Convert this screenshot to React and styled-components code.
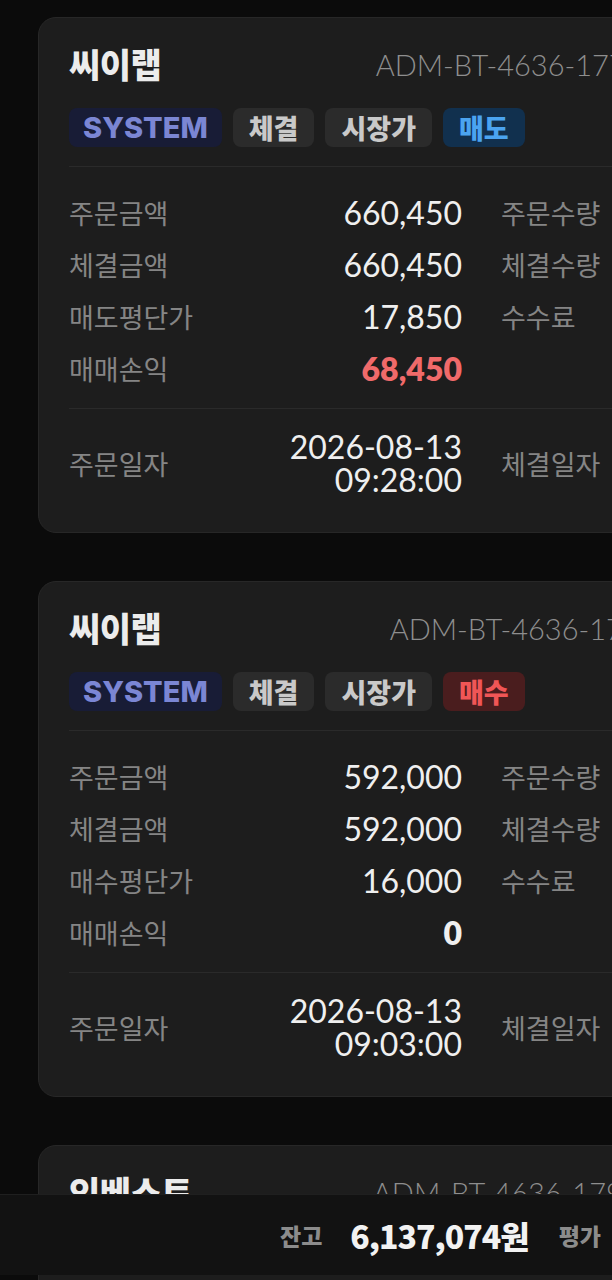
import React from "react";
import styled, { createGlobalStyle, css } from "styled-components";

const GlobalStyle = createGlobalStyle`
  html, body {
    margin: 0;
    padding: 0;
    background: #0b0b0b;
    overflow: hidden;
  }
  body {
    font-family: "Noto Sans CJK KR", "Noto Sans", sans-serif;
    -webkit-font-smoothing: antialiased;
  }
`;

const Page = styled.div`
  display: flex;
  flex-direction: column;
  gap: 48px;
  padding: 17px 0 0 38px;
  width: max-content;
`;

const Card = styled.section`
  box-sizing: border-box;
  width: 885px;
  background: #1d1d1d;
  border: 1px solid #272727;
  border-radius: 18px;
  padding: 26px 30px 36px 30px;
`;

const Header = styled.div`
  display: flex;
  align-items: center;
  justify-content: space-between;
  height: 40px;
`;

const Title = styled.h2`
  margin: 0;
  font-family: "Noto Sans CJK KR", sans-serif;
  font-size: 34px;
  font-weight: 900;
  line-height: 40px;
  color: #ececec;
  letter-spacing: -0.5px;
`;

const OrderId = styled.span`
  font-family: "Lato", "Noto Sans", sans-serif;
  font-size: 29px;
  font-weight: 300;
  color: #8e8e8e;
  white-space: nowrap;
`;

const Badges = styled.div`
  display: flex;
  gap: 11px;
  margin-top: 24px;
`;

const tones = {
  system: css`
    background: #181c36;
    color: #7b86d4;
  `,
  neutral: css`
    background: #2b2b2b;
    color: #c9c9c9;
  `,
  sell: css`
    background: #11304e;
    color: #4ba4f0;
  `,
  buy: css`
    background: #4a1d1e;
    color: #f05656;
  `,
};

const Badge = styled.span`
  display: inline-flex;
  align-items: center;
  height: 39px;
  padding: 0 ${(p) => (p.$latin ? 14 : 16)}px;
  border-radius: 8px;
  font-family: ${(p) =>
    p.$latin ? `"Inter", "Noto Sans", sans-serif` : `"Noto Sans CJK KR", sans-serif`};
  font-size: ${(p) => (p.$latin ? "29px" : "27px")};
  font-weight: 800;
  ${(p) => tones[p.$tone]}
`;

const Divider = styled.div`
  height: 1px;
  background: #2a2a2a;
  margin-top: ${(p) => p.$gap}px;
`;

const Grid = styled.div`
  display: grid;
  grid-template-columns: 393px 393px;
  column-gap: 39px;
  grid-auto-rows: ${(p) => p.$row || "52px"};
  margin-top: ${(p) => p.$gap}px;
`;

const Pair = styled.div`
  display: flex;
  align-items: center;
  justify-content: space-between;
`;

const Label = styled.span`
  font-size: 27px;
  color: #858585;
  font-weight: 400;
`;

const Value = styled.span`
  font-family: "Lato", "Noto Sans", sans-serif;
  font-size: 32px;
  color: #efefef;
  text-align: right;
  line-height: 33px;
  ${(p) =>
    p.$tone === "profit" &&
    css`
      color: #f06a6a;
      font-weight: 800;
    `}
  ${(p) =>
    p.$tone === "bold" &&
    css`
      font-weight: 800;
    `}
`;

const DateValue = styled(Value)`
  display: flex;
  flex-direction: column;
  align-items: flex-end;
`;

const BottomBar = styled.div`
  position: fixed;
  left: 0;
  right: 0;
  bottom: 5px;
  height: 81px;
  box-sizing: border-box;
  background: #121212;
  border-top: 1px solid #1f1f1f;
  display: flex;
  align-items: center;
  padding-left: 280px;
  white-space: nowrap;
`;

const BarLabel = styled.span`
  font-size: 23px;
  font-weight: 800;
  color: #8c8c8c;
  margin-right: ${(p) => p.$mr || 0}px;
`;

const BarValue = styled.span`
  font-size: 32px;
  font-weight: 800;
  color: #f2f2f2;
  letter-spacing: -1px;
  margin-right: 30px;
`;

const orders = [
  {
    name: "씨이랩",
    id: "ADM-BT-4636-1778-20260813-0928-S",
    side: "매도",
    sideTone: "sell",
    amount: "660,450",
    filled: "660,450",
    avgLabel: "매도평단가",
    avg: "17,850",
    pnl: "68,450",
    pnlTone: "profit",
    qty: "37",
    fee: "0",
    date: "2026-08-13",
    time: "09:28:00",
  },
  {
    name: "씨이랩",
    id: "ADM-BT-4636-1777-260813-0903-B1",
    side: "매수",
    sideTone: "buy",
    amount: "592,000",
    filled: "592,000",
    avgLabel: "매수평단가",
    avg: "16,000",
    pnl: "0",
    pnlTone: "bold",
    qty: "37",
    fee: "0",
    date: "2026-08-13",
    time: "09:03:00",
  },
  {
    name: "인베스트",
    id: "ADM-BT-4636-1790-20260812-1410-B",
    side: "매수",
    sideTone: "buy",
    amount: "1,020,000",
    filled: "1,020,000",
    avgLabel: "매수평단가",
    avg: "10,200",
    pnl: "0",
    pnlTone: "bold",
    qty: "100",
    fee: "0",
    date: "2026-08-12",
    time: "14:10:00",
  },
];

function OrderCard({ o }) {
  return (
    <Card>
      <Header>
        <Title>{o.name}</Title>
        <OrderId>{o.id}</OrderId>
      </Header>
      <Badges>
        <Badge $tone="system" $latin>SYSTEM</Badge>
        <Badge $tone="neutral">체결</Badge>
        <Badge $tone="neutral">시장가</Badge>
        <Badge $tone={o.sideTone}>{o.side}</Badge>
      </Badges>
      <Divider $gap={19} />
      <Grid $gap={19}>
        <Pair>
          <Label>주문금액</Label>
          <Value>{o.amount}</Value>
        </Pair>
        <Pair>
          <Label>주문수량</Label>
          <Value>{o.qty}</Value>
        </Pair>
        <Pair>
          <Label>체결금액</Label>
          <Value>{o.filled}</Value>
        </Pair>
        <Pair>
          <Label>체결수량</Label>
          <Value>{o.qty}</Value>
        </Pair>
        <Pair>
          <Label>{o.avgLabel}</Label>
          <Value>{o.avg}</Value>
        </Pair>
        <Pair>
          <Label>수수료</Label>
          <Value>{o.fee}</Value>
        </Pair>
        <Pair>
          <Label>매매손익</Label>
          <Value $tone={o.pnlTone}>{o.pnl}</Value>
        </Pair>
        <Pair />
      </Grid>
      <Divider $gap={14} />
      <Grid $gap={21} $row="66px">
        <Pair>
          <Label>주문일자</Label>
          <DateValue>
            <span>{o.date}</span>
            <span>{o.time}</span>
          </DateValue>
        </Pair>
        <Pair>
          <Label>체결일자</Label>
          <DateValue>
            <span>{o.date}</span>
            <span>{o.time}</span>
          </DateValue>
        </Pair>
      </Grid>
    </Card>
  );
}

export default function App() {
  return (
    <>
      <GlobalStyle />
      <Page>
        {orders.map((o, i) => (
          <OrderCard key={i} o={o} />
        ))}
      </Page>
      <BottomBar>
        <BarLabel $mr={28}>잔고</BarLabel>
        <BarValue>6,137,074원</BarValue>
        <BarLabel>평가</BarLabel>
      </BottomBar>
    </>
  );
}
